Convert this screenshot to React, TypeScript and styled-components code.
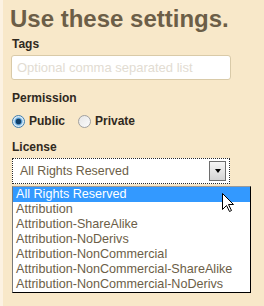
import React from 'react';
import styled, {createGlobalStyle} from 'styled-components';

const GlobalStyle = createGlobalStyle`
  html, body {
    margin: 0;
    padding: 0;
    background-color: #f8e8c9;
  }
  #root {
    min-height: 100vh;
  }
`;

const Page = styled.div`
  box-sizing: border-box;
  min-height: 100vh;
  border-left: 3px solid #fcf2e2;
  padding: 5px 0 0 9px;
  font-family: "Liberation Sans", Arial, sans-serif;
  background-color: #f8e8c9;
`;

const Title = styled.h1`
  margin: 0 0 4px -2px;
  font-size: 24px;
  line-height: 28px;
  font-weight: bold;
  color: #6c5e47;
`;

const Label = styled.div<{gap?: number}>`
  margin-top: ${(p) => p.gap || 0}px;
  font-size: 12px;
  line-height: 14px;
  font-weight: bold;
  color: #30291e;
`;

const TextInput = styled.input`
  display: block;
  box-sizing: border-box;
  width: 220px;
  height: 25px;
  margin: 4px 0 0 -1px;
  padding: 0 5px;
  border: 1px solid #d9caa8;
  border-radius: 3px;
  background: #fff;
  font-family: "Liberation Sans", Arial, sans-serif;
  font-size: 13px;
  outline: none;

  &::placeholder {
    color: #e2dcd2;
  }
`;

const RadioRow = styled.div`
  display: flex;
  align-items: center;
  height: 16px;
  margin-top: 8px;
`;

const RadioOption = styled.label`
  display: flex;
  align-items: center;
  gap: 4px;
  margin-right: 13px;
  font-size: 12px;
  font-weight: bold;
  color: #30291e;
`;

const RadioDot = styled.span<{checked?: boolean}>`
  position: relative;
  box-sizing: border-box;
  width: 13px;
  height: 13px;
  border-radius: 50%;
  border: 1px solid ${(p) => (p.checked ? '#3f7cac' : '#a0a0a0')};
  background: ${(p) =>
    p.checked
      ? 'radial-gradient(circle, #0f3f6a 0 2.5px, #4a90c8 3px, #cfe6f6 4.5px, #eaf4fb 6px)'
      : 'linear-gradient(135deg, #e6e6e6, #fbfbfb)'};
`;

const SelectWrap = styled.div`
  position: relative;
  width: 218px;
  margin-top: 4px;
`;

const SelectBox = styled.div`
  box-sizing: border-box;
  display: flex;
  align-items: center;
  justify-content: space-between;
  height: 26px;
  padding: 0 3px 0 7px;
  border: 1px dotted #2a2a2a;
  background: #fff;
  font-size: 12.4px;
  color: #6c5e47;
`;

const ArrowButton = styled.span`
  box-sizing: border-box;
  display: flex;
  align-items: center;
  justify-content: center;
  width: 17px;
  height: 20px;
  border: 1px solid #6d6d6d;
  background: linear-gradient(#f6f6f6, #d4d4d4);
`;

const Triangle = styled.span`
  width: 0;
  height: 0;
  border-left: 3.5px solid transparent;
  border-right: 3.5px solid transparent;
  border-top: 4px solid #000;
`;

const Dropdown = styled.ul`
  position: absolute;
  top: 28px;
  left: 0;
  box-sizing: border-box;
  width: 239px;
  margin: 0;
  padding: 0;
  list-style: none;
  background: #fff;
  border: 1px solid #000;
  border-left-color: #7a7a7a;
  border-top-color: #9a9a9a;
`;

const Option = styled.li<{active?: boolean}>`
  height: 15px;
  padding-left: 3px;
  font-size: 12.6px;
  line-height: 15px;
  white-space: nowrap;
  color: ${(p) => (p.active ? '#fff' : '#6c5e47')};
  background: ${(p) => (p.active ? '#3399ff' : 'transparent')};
`;

const Cursor = styled.svg`
  position: absolute;
  left: 210px;
  top: 35px;
`;

const licenses = [
  'All Rights Reserved',
  'Attribution',
  'Attribution-ShareAlike',
  'Attribution-NoDerivs',
  'Attribution-NonCommercial',
  'Attribution-NonCommercial-ShareAlike',
  'Attribution-NonCommercial-NoDerivs',
];

function App(): React.ReactElement {
  return (
    <Page>
      <GlobalStyle />
      <Title>Use these settings.</Title>
      <Label>Tags</Label>
      <TextInput placeholder='Optional comma separated list' />
      <Label gap={11}>Permission</Label>
      <RadioRow>
        <RadioOption>
          <RadioDot checked />
          Public
        </RadioOption>
        <RadioOption>
          <RadioDot />
          Private
        </RadioOption>
      </RadioRow>
      <Label gap={11}>License</Label>
      <SelectWrap>
        <SelectBox>
          All Rights Reserved
          <ArrowButton>
            <Triangle />
          </ArrowButton>
        </SelectBox>
        <Dropdown>
          {licenses.map((name, i) => (
            <Option key={name} active={i === 0}>{name}</Option>
          ))}
        </Dropdown>
        <Cursor width='13' height='20' viewBox='0 0 13 20'>
          <polygon
            points='0.5,0.5 0.5,16.5 4.5,12.5 7.5,18.5 9.5,17.5 6.5,11.5 11.5,11.5'
            fill='#fff'
            stroke='#000'
            strokeWidth='1'
            strokeLinejoin='miter'
          />
        </Cursor>
      </SelectWrap>
    </Page>
  );
}

export default App;
